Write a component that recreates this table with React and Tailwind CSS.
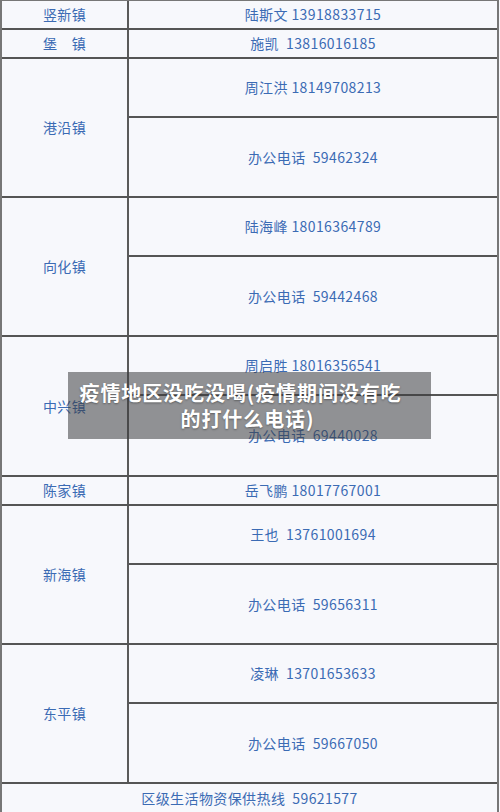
import React from 'react'

// 表格数据：镇名 + 联系人/办公电话
const rows = [
  { town: '竖新镇', lines: ['陆斯文 13918833715'] },
  { town: '堡\u3000镇', lines: ['施凯  13816016185'] },
  { town: '港沿镇', lines: ['周江洪 18149708213', '办公电话  59462324'], h: 'h-[139px]' },
  { town: '向化镇', lines: ['陆海峰 18016364789', '办公电话  59442468'], h: 'h-[139px]' },
  { town: '中兴镇', lines: ['周启胜 18016356541', '办公电话  69440028'], h: 'h-[140px]' },
  { town: '陈家镇', lines: ['岳飞鹏 18017767001'] },
  { town: '新海镇', lines: ['王也  13761001694', '办公电话  59656311'], h: 'h-[139px]' },
  { town: '东平镇', lines: ['凌琳  13701653633', '办公电话  59667050'], h: 'h-[139px]' },
]

function Row({ town, lines, h = 'h-[29px]' }) {
  return (
    <div className={`flex ${h} border-b-2 border-[#555]`}>
      <div className="w-[127px] shrink-0 flex items-center justify-center border-r-2 border-[#5a5a5a] whitespace-pre">
        {town}
      </div>
      <div className="flex-1 flex flex-col">
        {lines.length === 1 ? (
          <div className="flex-1 flex items-center justify-center whitespace-pre">{lines[0]}</div>
        ) : (
          <>
            <div className="h-[59px] flex items-center justify-center border-b-2 border-[#555] whitespace-pre">{lines[0]}</div>
            <div className="flex-1 flex items-center justify-center whitespace-pre">{lines[1]}</div>
          </>
        )}
      </div>
    </div>
  )
}

export default function App() {
  return (
    <div
      className="relative w-[500px] h-[812px] overflow-hidden bg-[#f7f8fc] text-[#3b6bb4] text-[14px] tracking-[0.4px]"
      style={{ fontFamily: '"Noto Sans CJK SC", "Noto Sans", sans-serif' }}
    >
      <div className="w-[499px] border-t border-l-2 border-r-2 border-[#777]">
        {rows.map((r, i) => (
          <Row key={i} {...r} />
        ))}
        <div className="h-[28px] flex items-center justify-center whitespace-pre">
          {'区级生活物资保供热线  59621577'}
        </div>
      </div>

      {/* 标题遮罩 */}
      <div className="absolute left-[68px] top-[372px] w-[363px] h-[67px] bg-[rgba(60,60,62,0.55)] flex flex-col items-center justify-center text-white font-bold text-[20px] leading-[26px] tracking-[0.9px] [text-shadow:0_1px_2px_rgba(0,0,0,0.35)]">
        <span className="pr-[18px]">疫情地区没吃没喝(疫情期间没有吃</span>
        <span className="pr-[4px]">的打什么电话)</span>
      </div>
    </div>
  )
}
